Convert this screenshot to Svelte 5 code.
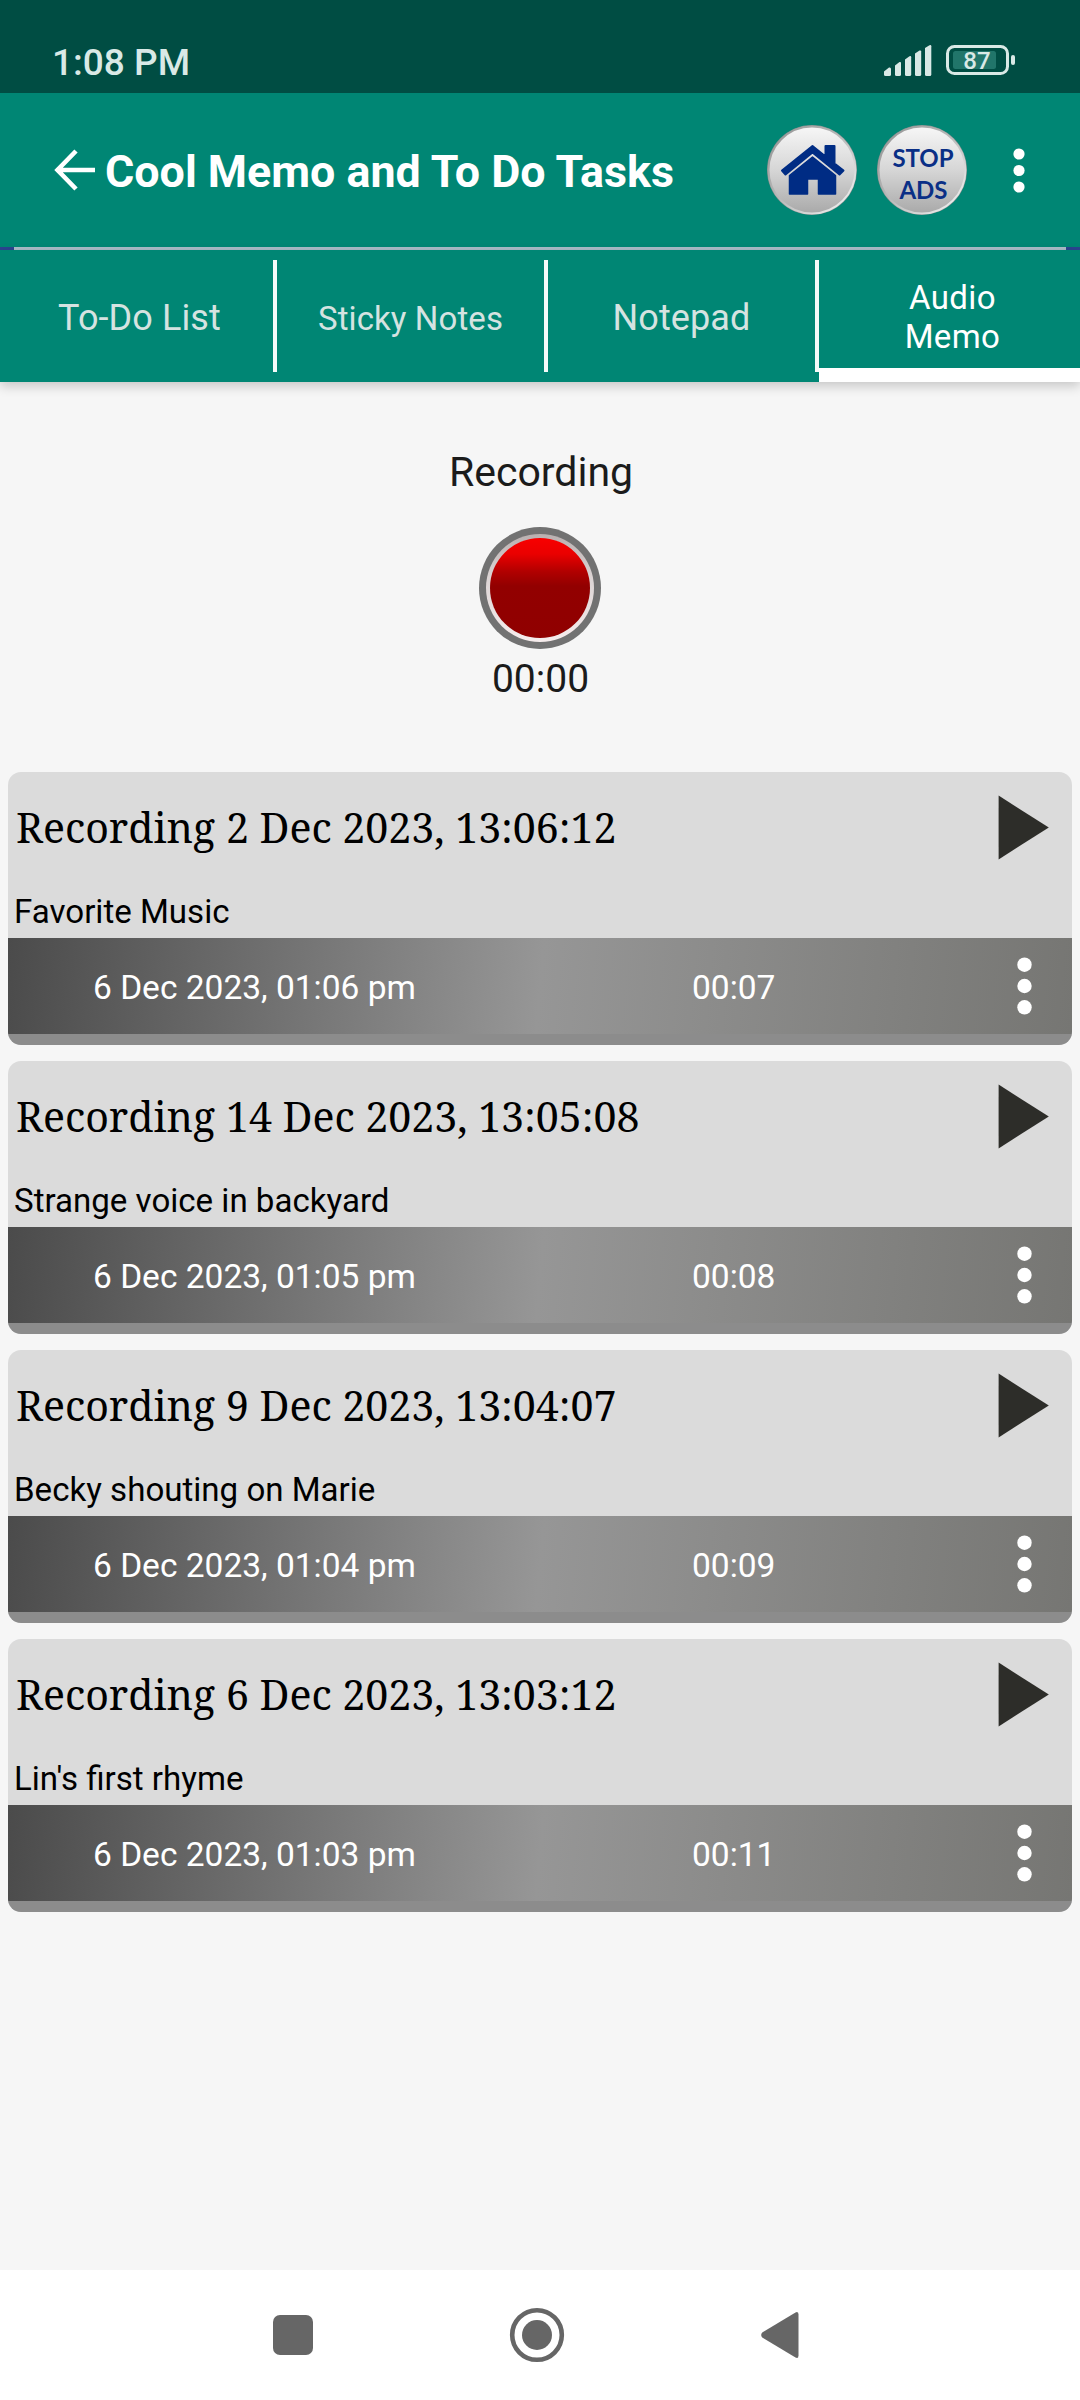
<script>
  let activeTab = 3;

  const tabs = [
    { label: 'To-Do List', size: 'large' },
    { label: 'Sticky Notes', size: 'small' },
    { label: 'Notepad', size: 'large' },
    { label: 'Audio Memo', size: 'small' }
  ];

  const recordings = [
    { title: 'Recording 2 Dec 2023, 13:06:12', note: 'Favorite Music', date: '6 Dec 2023, 01:06 pm', length: '00:07' },
    { title: 'Recording 14 Dec 2023, 13:05:08', note: 'Strange voice in backyard', date: '6 Dec 2023, 01:05 pm', length: '00:08' },
    { title: 'Recording 9 Dec 2023, 13:04:07', note: 'Becky shouting on Marie', date: '6 Dec 2023, 01:04 pm', length: '00:09' },
    { title: 'Recording 6 Dec 2023, 13:03:12', note: "Lin's first rhyme", date: '6 Dec 2023, 01:03 pm', length: '00:11' }
  ];
</script>

<div class="screen">
  <div class="status">
    <span class="clock">1:08 PM</span>
    <svg class="signal" width="48" height="31" viewBox="0 0 48 31" fill="#d9e9e6">
      <path d="M0 26.5 5 22.5Q7 22 7 24V29.500Q7 31 5.500 31H1.500Q0 31 0 29.500Z" />
      <path d="M11 20.500 15.500 17Q17 16.500 17 18V29.500Q17 31 15.500 31H12.500Q11 31 11 29.500Z" />
      <path d="M21 14.500 25.500 11.200Q27.200 10.600 27.200 12.200V29.500Q27.200 31 25.700 31H22.500Q21 31 21 29.500Z" />
      <path d="M31 8.600 35.500 5.500Q37.200 5 37.200 6.500V29.500Q37.200 31 35.700 31H32.500Q31 31 31 29.500Z" />
      <path d="M41 3 45.500 .2Q47.300 -.4 47.300 1.200V29.500Q47.300 31 45.800 31H42.500Q41 31 41 29.500Z" />
    </svg>
    <svg class="battery" width="70" height="30" viewBox="0 0 70 30">
      <rect x="1.500" y="1.500" width="60" height="27" rx="7" fill="none" stroke="#d9e9e6" stroke-width="3" />
      <rect x="7" y="6" width="43" height="18" rx="2.500" fill="#21756a" />
      <rect x="65" y="10" width="4" height="10" rx="2" fill="#d9e9e6" />
      <text x="31" y="23.500" text-anchor="middle">87</text>
    </svg>
  </div>

  <header class="toolbar">
    <button class="plain back" aria-label="Back">
      <svg width="42" height="42" viewBox="0 0 42 42" fill="none" stroke="#fff" stroke-width="4.600">
        <path d="M41 21H4M22 2 3.500 21 22 40" />
      </svg>
    </button>
    <h1>Cool Memo and To Do Tasks</h1>
    <button class="plain home" aria-label="Home">
      <svg width="92" height="92" viewBox="0 0 92 92">
        <defs>
          <linearGradient id="silver" x1="0" y1="0" x2="0" y2="1">
            <stop offset="0" stop-color="#f7f7f7" />
            <stop offset=".5" stop-color="#d6d6d6" />
            <stop offset="1" stop-color="#a9a9a9" />
          </linearGradient>
          <linearGradient id="rim" x1="0" y1="0" x2="1" y2="1">
            <stop offset=".1" stop-color="#9a9a9a" />
            <stop offset=".5" stop-color="#bcbcbc" />
            <stop offset=".85" stop-color="#e6e6e6" />
          </linearGradient>
        </defs>
        <circle cx="46" cy="46" r="45" fill="#7d8f8c" />
        <circle cx="46" cy="46" r="43.500" fill="url(#silver)" stroke="url(#rim)" stroke-width="2" />
        <g fill="#002c84" stroke="#002c84" stroke-linejoin="round">
          <path d="M46.500 22 59.500 32.500V22H68.500V39.500L77.500 46.500 73.500 50.500 46.500 28.500 19.500 50.500 16 46.500Z" stroke-width="2" />
          <path d="M46.500 33 69.500 51.500V70H52.500V55H41.500V70H23.500V51.500Z" stroke-width="1.500" />
        </g>
      </svg>
    </button>
    <button class="plain ads" aria-label="Stop ads">
      <svg width="92" height="92" viewBox="0 0 92 92">
        <circle cx="46" cy="46" r="45" fill="#7d8f8c" />
        <circle cx="46" cy="46" r="43.500" fill="url(#silver)" stroke="url(#rim)" stroke-width="2" />
        <text x="47" y="42.500" text-anchor="middle">STOP</text>
        <text x="47.500" y="74.500" text-anchor="middle">ADS</text>
      </svg>
    </button>
    <button class="plain more" aria-label="More options">
      <svg width="12" height="45" viewBox="0 0 12 45" fill="#fff">
        <circle cx="6" cy="6" r="5.600" />
        <circle cx="6" cy="22.500" r="5.600" />
        <circle cx="6" cy="39" r="5.600" />
      </svg>
    </button>
  </header>

  <div class="rule"><div></div></div>

  <nav class="tabs">
    {#each tabs as tab, i}
      <button class="plain tab {tab.size}" class:active={activeTab === i} on:click={() => (activeTab = i)}>
        <span>{tab.label}</span>
      </button>
    {/each}
  </nav>

  <main>
    <section class="recorder">
      <h2>Recording</h2>
      <button class="plain record" aria-label="Record">
        <svg width="122" height="122" viewBox="0 0 122 122">
          <defs>
            <linearGradient id="red" x1="0" y1="0" x2="0" y2="1">
              <stop offset="0" stop-color="#f80000" />
              <stop offset=".16" stop-color="#ea0000" />
              <stop offset=".34" stop-color="#b00000" />
              <stop offset=".48" stop-color="#920000" />
              <stop offset="1" stop-color="#900000" />
            </linearGradient>
            <linearGradient id="ring" x1="0" y1="0" x2="0" y2="1">
              <stop offset="0" stop-color="#b9b0b0" />
              <stop offset=".4" stop-color="#dcd4d4" />
              <stop offset="1" stop-color="#f6ecec" />
            </linearGradient>
          </defs>
          <circle cx="61" cy="61" r="61" fill="#727272" />
          <circle cx="61" cy="61" r="54" fill="url(#ring)" />
          <circle cx="61" cy="61" r="50" fill="url(#red)" />
        </svg>
      </button>
      <div class="timer">00:00</div>
    </section>

    <section class="list">
      {#each recordings as rec}
        <article class="card">
          <div class="top">
            <div class="title">{rec.title}</div>
            <button class="plain play" aria-label="Play">
              <svg width="51" height="65" viewBox="0 0 51 65"><path d="M.6 .6 50.800 32.500 .6 64.400Z" fill="#2d2d29" /></svg>
            </button>
          </div>
          <div class="note">{rec.note}</div>
          <div class="meta">
            <span class="date">{rec.date}</span>
            <span class="length">{rec.length}</span>
            <button class="plain options" aria-label="Options">
              <svg width="16" height="58" viewBox="0 0 16 58" fill="#fff">
                <circle cx="8.500" cy="7.700" r="7.200" />
                <circle cx="8.500" cy="29" r="7.200" />
                <circle cx="8.500" cy="50.300" r="7.200" />
              </svg>
            </button>
          </div>
        </article>
      {/each}
    </section>
  </main>

  <footer class="navbar">
    <svg class="recents" width="40" height="40" viewBox="0 0 40 40"><rect width="40" height="40" rx="7" fill="#666" /></svg>
    <svg class="circle" width="56" height="56" viewBox="0 0 56 56">
      <circle cx="28" cy="28" r="24.800" fill="none" stroke="#666" stroke-width="4.600" />
      <circle cx="28" cy="28" r="15" fill="#666" />
    </svg>
    <svg class="prev" width="38" height="56" viewBox="0 0 38 56">
      <path d="M34.500 5.400Q37.500 4 37.500 7.500V48.500Q37.500 52 34.500 50.600L1.200 30.500Q-.8 28 1.200 25.500Z" fill="#666" />
    </svg>
  </footer>
</div>

<style>
  :global(body) {
    background: #f6f6f6;
  }

  .screen {
    display: flex;
    flex-direction: column;
    width: 1080px;
    height: 2400px;
    background: #f6f6f6;
    font-family: Roboto, sans-serif;
    overflow: hidden;
  }

  .plain {
    display: block;
    margin: 0;
    padding: 0;
    border: 0;
    background: none;
    font: inherit;
    color: inherit;
  }

  svg {
    display: block;
  }

  .status {
    display: flex;
    box-sizing: border-box;
    height: 93px;
    padding: 45px 64px 0 52px;
    background: #004d43;
    color: #d9e9e6;
  }
  .clock {
    flex: 1;
    margin-top: -4px;
    font-size: 37px;
    font-weight: 500;
    line-height: 43px;
  }
  .signal {
    margin-right: 14px;
  }
  .battery text {
    font: 500 24px Roboto, sans-serif;
    fill: #d9e9e6;
  }

  .toolbar {
    display: flex;
    align-items: center;
    height: 154px;
    background: #008674;
    color: #fff;
  }
  .back {
    margin-left: 54px;
  }
  h1 {
    flex: 1;
    margin: 3px 0 0 9px;
    font-size: 44.8px;
    font-weight: 700;
    line-height: 52px;
    white-space: nowrap;
  }
  .home {
    margin-right: 18px;
  }
  .ads text {
    font: 700 24px Lato, sans-serif;
    fill: #0a2f86;
  }
  .more {
    margin: 0 55px 0 45px;
  }

  .rule {
    height: 3px;
    padding: 0 14px;
    background: #2b4590;
  }
  .rule div {
    height: 3px;
    background: #a9bcc8;
  }

  .tabs {
    position: relative;
    display: grid;
    grid-template-columns: 277px 271px 271px 261px;
    height: 132px;
    background: #008674;
    box-shadow: 0 4px 11px rgba(0, 0, 0, 0.2);
  }
  .tab {
    display: flex;
    align-items: center;
    justify-content: center;
    box-sizing: border-box;
    height: 112px;
    margin-top: 10px;
    padding-top: 4px;
    border-right: 4px solid #f4fbfa;
    color: #d5e3e1;
  }
  .tab.large {
    font-size: 36px;
    letter-spacing: 0.1px;
  }
  .tab.small {
    font-size: 33px;
    letter-spacing: 0.1px;
  }
  .tab:first-child {
    padding-left: 6px;
  }
  .tab:last-child {
    border-right: 0;
  }
  .tab.active {
    height: 122px;
    padding: 6px 0 0 6px;
    border-bottom: 14px solid #fff;
    color: #fff;
    letter-spacing: 0.4px;
  }
  .tab.active span {
    width: 110px;
    line-height: 39px;
  }

  main {
    flex: 1;
  }
  .recorder {
    display: flex;
    flex-direction: column;
    align-items: center;
    height: 390px;
    color: #1b1b1b;
  }
  h2 {
    margin: 65px 0 0 2px;
    font-size: 41px;
    font-weight: 400;
    line-height: 50px;
  }
  .record {
    margin-top: 30px;
  }
  .timer {
    margin: 7px 0 0 1px;
    font-size: 39px;
    line-height: 46px;
  }

  .list {
    display: grid;
    gap: 16px;
    padding: 0 8px;
  }
  .card {
    height: 273px;
    border-radius: 13px;
    background: #dbdbdb;
    overflow: hidden;
  }
  .top {
    display: flex;
    align-items: center;
    height: 110px;
  }
  .title {
    flex: 1;
    padding-left: 8px;
    color: #000;
    font-family: 'Noto Serif', 'DejaVu Serif Condensed', 'DejaVu Serif', serif;
    font-size: 41.1px;
    font-stretch: condensed;
    white-space: nowrap;
  }
  .play {
    margin-right: 23px;
  }
  .note {
    height: 56px;
    padding-left: 6px;
    color: #000;
    font-size: 33.1px;
    line-height: 60px;
  }
  .meta {
    display: flex;
    align-items: center;
    height: 96px;
    border-bottom: 11px solid #8c8c8c;
    background: linear-gradient(95.15deg, #4b4b4b, #969696 50%, #767673) padding-box;
    color: #fff;
    font-size: 33.5px;
  }
  .date {
    width: 599px;
    padding: 2px 0 0 85px;
  }
  .length {
    flex: 1;
    padding-top: 2px;
  }
  .options {
    margin-right: 40px;
  }

  .navbar {
    display: flex;
    align-items: center;
    height: 130px;
    padding-left: 273px;
    background: #fff;
  }
  .circle {
    margin: 0 196px;
  }
</style>
